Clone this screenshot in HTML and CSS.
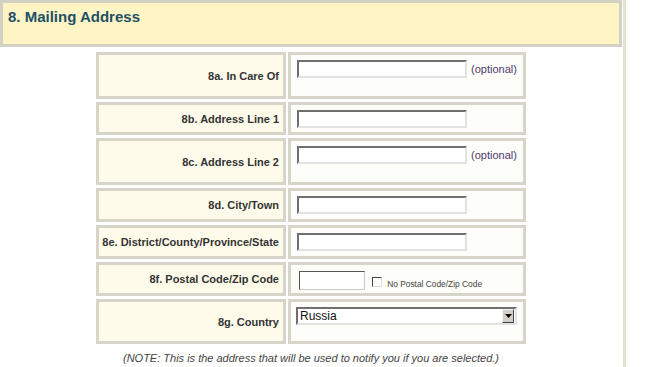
FILE: index.html
```html
<!DOCTYPE html>
<html lang="en">
<head>
    <meta charset="UTF-8">
    <title>Mailing Address</title>
    <link rel="stylesheet" href="styles.css">
</head>
<body>
    <div class="page">
        <div class="section-head">8. Mailing Address</div>

        <table class="form-table">
            <tr class="tall">
                <td class="label">8a. In Care Of</td>
                <td class="value">
                    <span class="field"></span>
                    <span class="optional">(optional)</span>
                </td>
            </tr>
            <tr class="short first">
                <td class="label">8b. Address Line 1</td>
                <td class="value"><span class="field"></span></td>
            </tr>
            <tr class="tall">
                <td class="label">8c. Address Line 2</td>
                <td class="value">
                    <span class="field"></span>
                    <span class="optional">(optional)</span>
                </td>
            </tr>
            <tr class="short">
                <td class="label">8d. City/Town</td>
                <td class="value"><span class="field"></span></td>
            </tr>
            <tr class="short">
                <td class="label">8e. District/County/Province/State</td>
                <td class="value"><span class="field"></span></td>
            </tr>
            <tr class="short">
                <td class="label">8f. Postal Code/Zip Code</td>
                <td class="value postal">
                    <span class="field zip"></span>
                    <span class="check"></span>
                    <span class="check-text">No Postal Code/Zip Code</span>
                </td>
            </tr>
            <tr class="country">
                <td class="label">8g. Country</td>
                <td class="value">
                    <div class="select">
                        <span class="select-text">Russia</span>
                        <span class="select-btn">
                            <svg width="7" height="4" viewBox="0 0 7 4"><path d="M0 0h7L3.5 4z" fill="#000"/></svg>
                        </span>
                    </div>
                </td>
            </tr>
        </table>

        <p class="note">(NOTE: This is the address that will be used to notify you if you are selected.)</p>
    </div>
</body>
</html>
```

FILE: styles.css
```css
body {
    margin: 0;
    font-family: "Liberation Sans", Arial, sans-serif;
    background-color: #fff;
}

.page {
    width: 622px;
    min-height: 367px;
    padding-right: 1px;
    border-right: 3px solid #e3e1d4;
}

.section-head {
    height: 47px;
    box-sizing: border-box;
    padding: 5px 0 0 5px;
    border: 3px solid #d3d1c4;
    background-color: #fff5c4;
    color: #1e4f68;
    font-size: 15px;
    font-weight: bold;
}

.form-table {
    margin: 2px auto 0;
    border-spacing: 2px 3px;
    font-size: 11px;
}

.form-table td {
    border: 3px solid #d7d5ca;
    padding: 0;
}

.form-table tr.tall { height: 47px; }
.form-table tr.short { height: 34px; }
.form-table tr.first { height: 33px; }
.form-table tr.country { height: 45px; }

.label {
    width: 180px;
    padding: 0 4px 0 0 !important;
    background-color: #fffbea;
    color: #333;
    font-weight: bold;
    text-align: right;
    vertical-align: middle;
}

.value {
    width: 226px;
    padding: 5px 0 0 6px !important;
    background-color: #fdfdf9;
    vertical-align: top;
}

.field {
    display: inline-block;
    vertical-align: top;
    width: 170px;
    height: 18px;
    box-sizing: border-box;
    border: 2px solid;
    border-color: #6f6f6f #e2e2e2 #e2e2e2 #6f6f6f;
    background-color: #fff;
}

.optional {
    display: inline-block;
    margin: 3px 0 0 1px;
    color: #4d3a6e;
    font-size: 11px;
}

.postal .field.zip {
    width: 66px;
    height: 19px;
    margin: 1px 0 0 2px;
    border-width: 1px;
    border-color: #555 #c8c8c8 #c8c8c8 #555;
}

.check {
    display: inline-block;
    vertical-align: top;
    width: 10px;
    height: 10px;
    box-sizing: border-box;
    margin: 7px 0 0 4px;
    border: 1px solid;
    border-color: #444 #ddd #ddd #444;
    background-color: #fff;
}

.check-text {
    display: inline-block;
    vertical-align: top;
    margin: 9px 0 0 2px;
    font-size: 8.4px;
    color: #444;
}

.select {
    display: flex;
    align-items: center;
    width: 221px;
    height: 18px;
    box-sizing: border-box;
    margin-left: -1px;
    border: 2px solid;
    border-color: #6f6f6f #e2e2e2 #e2e2e2 #6f6f6f;
    background-color: #fff;
}

.select-text {
    flex: 1;
    padding-left: 2px;
    font-size: 12px;
    color: #111;
}

.select-btn {
    display: flex;
    align-items: center;
    justify-content: center;
    width: 10px;
    height: 12px;
    margin-right: 1px;
    border: 1px solid;
    border-color: #f4f4f4 #404040 #404040 #f4f4f4;
    background-color: #d4d0c8;
}

.note {
    margin: 5px 0 0;
    text-align: center;
    font-size: 11px;
    font-style: italic;
    color: #444;
}
```
